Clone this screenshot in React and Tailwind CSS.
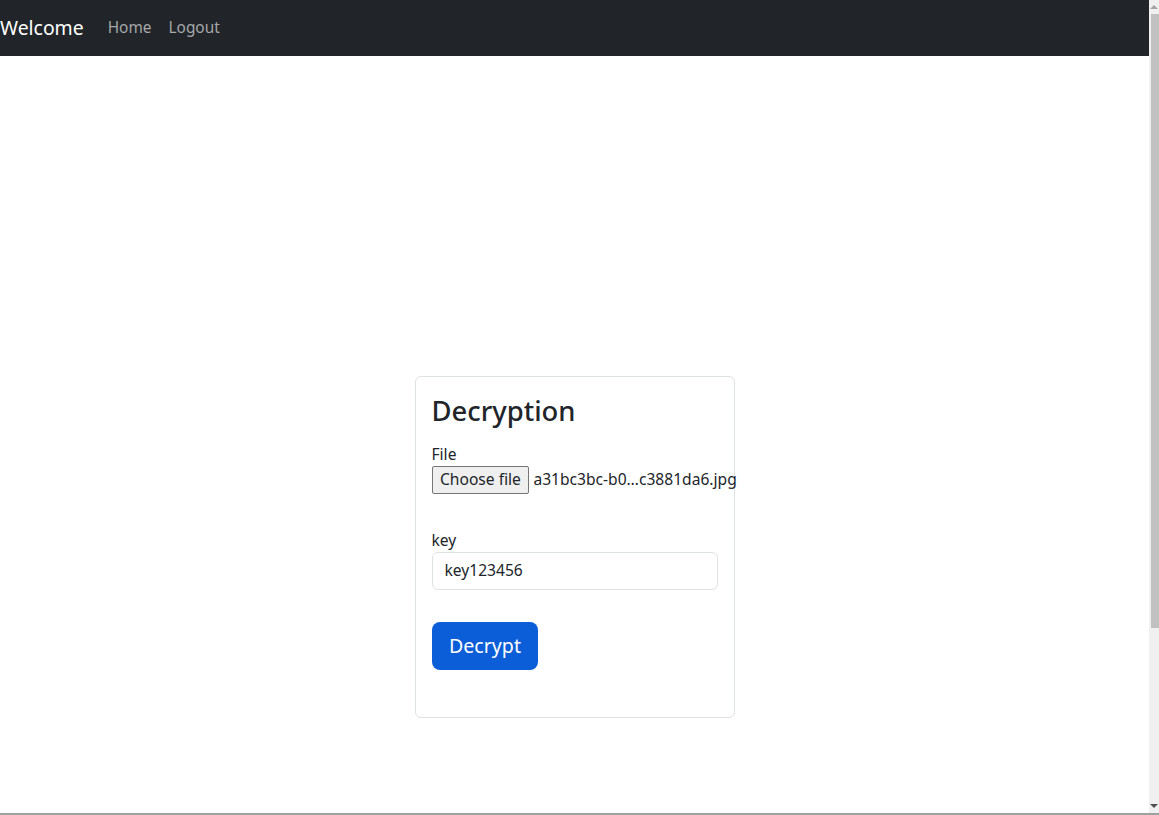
import React from "react";

const font = { fontFamily: '"Noto Sans", "Liberation Sans", sans-serif' };

function Navbar() {
  return (
    <nav className="h-[56px] bg-[#212529] flex items-center">
      <span className="text-white text-[19.4px] mr-[24px] leading-[30px]">Welcome</span>
      <a className="text-[15.4px] text-[#a6a8aa] mr-[17px]">Home</a>
      <a className="text-[15.4px] text-[#a6a8aa]">Logout</a>
    </nav>
  );
}

function DecryptCard() {
  return (
    <div className="w-[320px] h-[342px] border border-[#dee2e6] rounded-[6px] px-[16px] pt-[16px] text-[#212529] text-[15.6px]">
      <h3 className="text-[27.4px] font-medium leading-[36px] mb-[14px]">Decryption</h3>

      <label className="block leading-[22px]">File</label>
      <div className="flex items-center whitespace-nowrap mt-[1px]">
        <span className="h-[28px] px-[7.5px] flex items-center bg-[#efefef] border border-[#767676] rounded-[2px]">
          Choose file
        </span>
        <span className="ml-[4px]">a31bc3bc-b0…c3881da6.jpg</span>
      </div>

      <label className="block leading-[22px] mt-[35px]">key</label>
      <div className="mt-[1px] h-[38px] border border-[#dee2e6] rounded-[6px] px-[12px] flex items-center">
        key123456
      </div>

      <button className="mt-[32px] h-[48px] px-[17.5px] rounded-[8px] bg-[#0b5ed7] text-white text-[19.6px]">
        Decrypt
      </button>
    </div>
  );
}

function Scrollbar() {
  return (
    <div className="w-[10px] bg-[#f0f0f0] flex flex-col items-end">
      <div className="h-[14px] w-full flex items-center justify-center">
        <div className="w-0 h-0 border-l-[4px] border-r-[4px] border-b-[4px] border-l-transparent border-r-transparent border-b-[#a3a3a3]" />
      </div>
      <div className="w-[8px] h-[614px] bg-[#c1c1c1]" />
      <div className="flex-1" />
      <div className="h-[14px] w-full flex items-center justify-center">
        <div className="w-0 h-0 border-l-[4px] border-r-[4px] border-t-[4px] border-l-transparent border-r-transparent border-t-[#505050]" />
      </div>
    </div>
  );
}

export default function App() {
  return (
    <div style={font} className="h-[815px] overflow-hidden flex flex-col bg-white">
      <div className="flex flex-1">
        <div className="w-[1149px] flex flex-col">
          <Navbar />
          <div className="flex justify-center pt-[320px]">
            <DecryptCard />
          </div>
        </div>
        <Scrollbar />
      </div>
      <div className="h-[2px] bg-[#a0a0a0]" />
    </div>
  );
}
